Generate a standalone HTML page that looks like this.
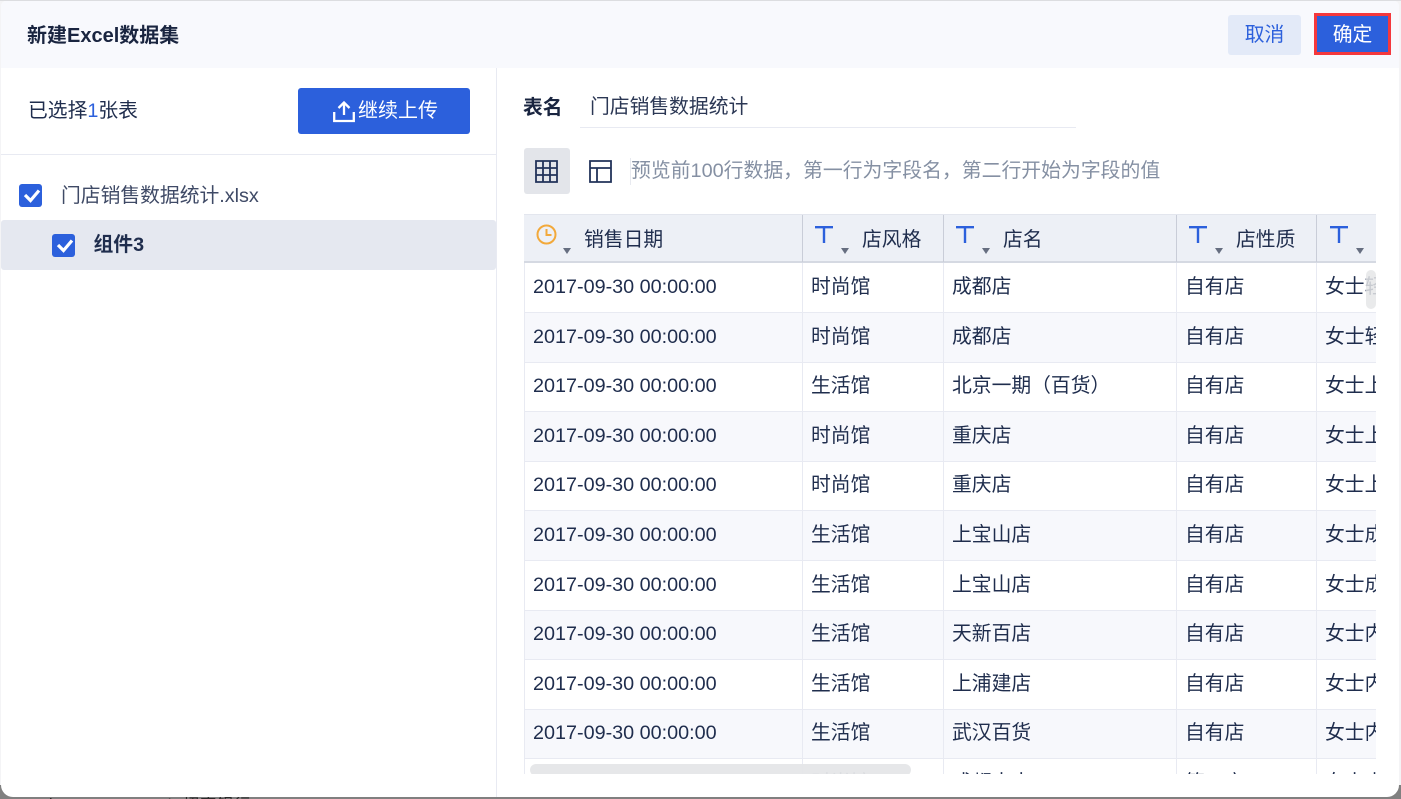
<!DOCTYPE html>
<html lang="zh"><head><meta charset="utf-8"><title>新建Excel数据集</title>
<style>
*{box-sizing:border-box}
html,body{margin:0;padding:0;width:1401px;height:799px;overflow:hidden;background:#f4f4f6}
#root{position:relative;width:1401px;height:799px;overflow:hidden;background:#f4f4f6;font-family:"Liberation Sans","Noto Sans CJK SC",sans-serif;color:#1f2d4d;font-size:19.8px}
.a{position:absolute;white-space:nowrap}
#dlg{position:absolute;left:1px;top:1px;width:1398px;height:796px;background:#fff;border-radius:5px 5px 12px 12px;overflow:hidden}
#bg{left:24px;top:791px;font-size:16px;color:#2a2a2a;letter-spacing:1px}
.cb{position:absolute;width:23px;height:23px;background:#2c60dc;border-radius:3px}
.cb svg{display:block}
#tw{position:absolute;left:523px;top:213px;width:852px;height:560px;overflow:hidden}
table{border-collapse:collapse;table-layout:fixed;width:1000px;position:absolute;left:0;top:49px}
td{height:49.6px;padding:0 0 .4px 8px;border:1px solid #e8eaf2;border-top:0;white-space:nowrap;overflow:hidden;line-height:45px;vertical-align:middle;color:#1f2d4d}
tr:nth-child(even) td{background:#f7f8fc}
#hd{position:absolute;left:0;top:0;width:852px;height:49px;background:#edf0f6;border-top:1px solid #e3e6ee;border-bottom:2px solid #d5d9e2}
.hs{position:absolute;top:0;width:1px;height:47px;background:#c9cdd8}
.ht{position:absolute;top:7px;line-height:36px}
.ar{position:absolute;top:33px;width:0;height:0;border-left:4px solid transparent;border-right:4px solid transparent;border-top:6px solid #666e80}
.tt{position:absolute;top:11px;width:18px;height:17px}
</style></head><body>
<div id="root">
<div class="a" style="left:0;top:0;width:1401px;height:1px;background:#dcdde0"></div>
<div class="a" style="left:0;top:785px;width:1401px;height:14px;background:#808080"></div>
<div class="a" id="bg">▪▪ Ⅰ Ccnnnnc 8 Bit   招商银行</div>
<div id="dlg">
<div class="a" style="left:0;top:0;width:1398px;height:67px;background:#f8f9fd"></div>
<div class="a" style="left:26px;top:20px;line-height:30px;font-weight:bold;color:#1a2540;font-size:20px">新建Excel数据集</div>
<div class="a" style="left:1227px;top:14px;width:73px;height:40px;background:#e3eaf8;border-radius:3px;color:#2c60dc;text-align:center;line-height:40px">取消</div>
<div class="a" style="left:1313px;top:12px;width:77px;height:42px;background:#2c60dc;border:3px solid #f4383d;color:#fff;text-align:center;line-height:39px">确定</div>

<div class="a" style="left:495px;top:67px;width:1px;height:729px;background:#e8eaf2"></div>
<div class="a" style="left:27px;top:95px;line-height:30px">已选择<span style="color:#2c60dc">1</span>张表</div>
<div class="a" style="left:297px;top:87px;width:172px;height:46px;background:#2c60dc;border-radius:3px;color:#fff;line-height:47px;padding-left:60px;font-size:20px">继续上传
<svg style="position:absolute;left:35px;top:12px" width="22" height="24" viewBox="0 0 22 24" fill="none" stroke="#fff" stroke-width="2.300"><path d="M1.200 12v9h19.600v-9M11 2.500V15M5.500 8l5.500-5.500L16.500 8"/></svg></div>
<div class="a" style="left:0;top:153px;width:495px;height:1px;background:#e8eaf2"></div>

<div class="cb" style="left:18px;top:183px"><svg width="23" height="23" viewBox="0 0 23 23" fill="none" stroke="#fff" stroke-width="3.200"><path d="M6 11l5.500 5.500L20 6.500"/></svg></div>
<div class="a" style="left:60px;top:180px;line-height:30px;color:#3f4a66">门店销售数据统计.xlsx</div>
<div class="a" style="left:0;top:219px;width:495px;height:50px;background:#e5e8f0;border-radius:3px"></div>
<div class="cb" style="left:51px;top:233px"><svg width="23" height="23" viewBox="0 0 23 23" fill="none" stroke="#fff" stroke-width="3.200"><path d="M6 11l5.500 5.500L20 6.500"/></svg></div>
<div class="a" style="left:92.500px;top:229px;line-height:30px;font-weight:bold;color:#1f2d4d">组件3</div>

<div class="a" style="left:522px;top:92px;line-height:30px;font-weight:bold;color:#1a2540">表名</div>
<div class="a" style="left:589px;top:91px;line-height:30px;color:#2b3754">门店销售数据统计</div>
<div class="a" style="left:579px;top:126px;width:496px;height:1px;background:#e8eaf2"></div>

<div class="a" style="left:523px;top:147px;width:46px;height:46px;background:#e3e5ea;border-radius:3px"></div>
<svg class="a" style="left:534px;top:159px" width="23" height="23" viewBox="0 0 23 23" fill="none" stroke="#22335a" stroke-width="1.800"><path d="M1 1h21v21H1zM1 8h21M1 15h21M8 1v21M15 1v21"/></svg>
<svg class="a" style="left:588px;top:159px" width="23" height="23" viewBox="0 0 23 23" fill="none" stroke="#22335a" stroke-width="1.800"><path d="M1 1h21v21H1zM1 8h21M8 8v14"/></svg>
<div class="a" style="left:629px;top:157px;width:1px;height:27px;background:#e8eaf0"></div>
<div class="a" style="left:630px;top:155px;line-height:30px;color:#8590a3;font-size:19.85px">预览前100行数据，第一行为字段名，第二行开始为字段的值</div>

<div id="tw">
<table>
<colgroup><col style="width:278px"><col style="width:141px"><col style="width:233px"><col style="width:140px"><col style="width:208px"></colgroup>
<tr><td>2017-09-30 00:00:00</td><td>时尚馆</td><td>成都店</td><td>自有店</td><td>女士轻</td></tr>
<tr><td>2017-09-30 00:00:00</td><td>时尚馆</td><td>成都店</td><td>自有店</td><td>女士轻</td></tr>
<tr><td>2017-09-30 00:00:00</td><td>生活馆</td><td>北京一期（百货）</td><td>自有店</td><td>女士上</td></tr>
<tr><td>2017-09-30 00:00:00</td><td>时尚馆</td><td>重庆店</td><td>自有店</td><td>女士上</td></tr>
<tr><td>2017-09-30 00:00:00</td><td>时尚馆</td><td>重庆店</td><td>自有店</td><td>女士上</td></tr>
<tr><td>2017-09-30 00:00:00</td><td>生活馆</td><td>上宝山店</td><td>自有店</td><td>女士成</td></tr>
<tr><td>2017-09-30 00:00:00</td><td>生活馆</td><td>上宝山店</td><td>自有店</td><td>女士成</td></tr>
<tr><td>2017-09-30 00:00:00</td><td>生活馆</td><td>天新百店</td><td>自有店</td><td>女士内</td></tr>
<tr><td>2017-09-30 00:00:00</td><td>生活馆</td><td>上浦建店</td><td>自有店</td><td>女士内</td></tr>
<tr><td>2017-09-30 00:00:00</td><td>生活馆</td><td>武汉百货</td><td>自有店</td><td>女士内</td></tr>
<tr><td>2017-09-30 00:00:00</td><td>时尚馆</td><td>成都太古</td><td>第三方</td><td>女士内</td></tr>
</table>
<div id="hd">
<div class="hs" style="left:278px"></div><div class="hs" style="left:419px"></div><div class="hs" style="left:652px"></div><div class="hs" style="left:792px"></div>
<svg class="a" style="left:11.500px;top:8.500px" width="21" height="21" viewBox="0 0 21 21" fill="none" stroke="#f2a93b" stroke-width="2"><circle cx="10.500" cy="10.500" r="9"/><path d="M10.500 5v6h5"/></svg>
<div class="ar" style="left:39px"></div><div class="ht" style="left:60px">销售日期</div>
<svg class="tt" style="left:291px" viewBox="0 0 18 17" fill="none" stroke="#2c60dc" stroke-width="2.400"><path d="M0 1.200h18M9 1.200V17"/></svg>
<div class="ar" style="left:317px"></div><div class="ht" style="left:338px">店风格</div>
<svg class="tt" style="left:432px" viewBox="0 0 18 17" fill="none" stroke="#2c60dc" stroke-width="2.400"><path d="M0 1.200h18M9 1.200V17"/></svg>
<div class="ar" style="left:458px"></div><div class="ht" style="left:479px">店名</div>
<svg class="tt" style="left:665px" viewBox="0 0 18 17" fill="none" stroke="#2c60dc" stroke-width="2.400"><path d="M0 1.200h18M9 1.200V17"/></svg>
<div class="ar" style="left:691px"></div><div class="ht" style="left:712px">店性质</div>
<svg class="tt" style="left:806px" viewBox="0 0 18 17" fill="none" stroke="#2c60dc" stroke-width="2.400"><path d="M0 1.200h18M9 1.200V17"/></svg>
<div class="ar" style="left:832px"></div>
</div>
<div class="a" style="left:6px;top:550px;width:381px;height:12px;background:#e5e6e8;border-radius:6px;opacity:.95"></div>
<div class="a" style="left:842px;top:56px;width:10px;height:39px;background:#e5e6e8;border-radius:5px;opacity:.85"></div>
</div>
</div>
</div>
</body></html>
